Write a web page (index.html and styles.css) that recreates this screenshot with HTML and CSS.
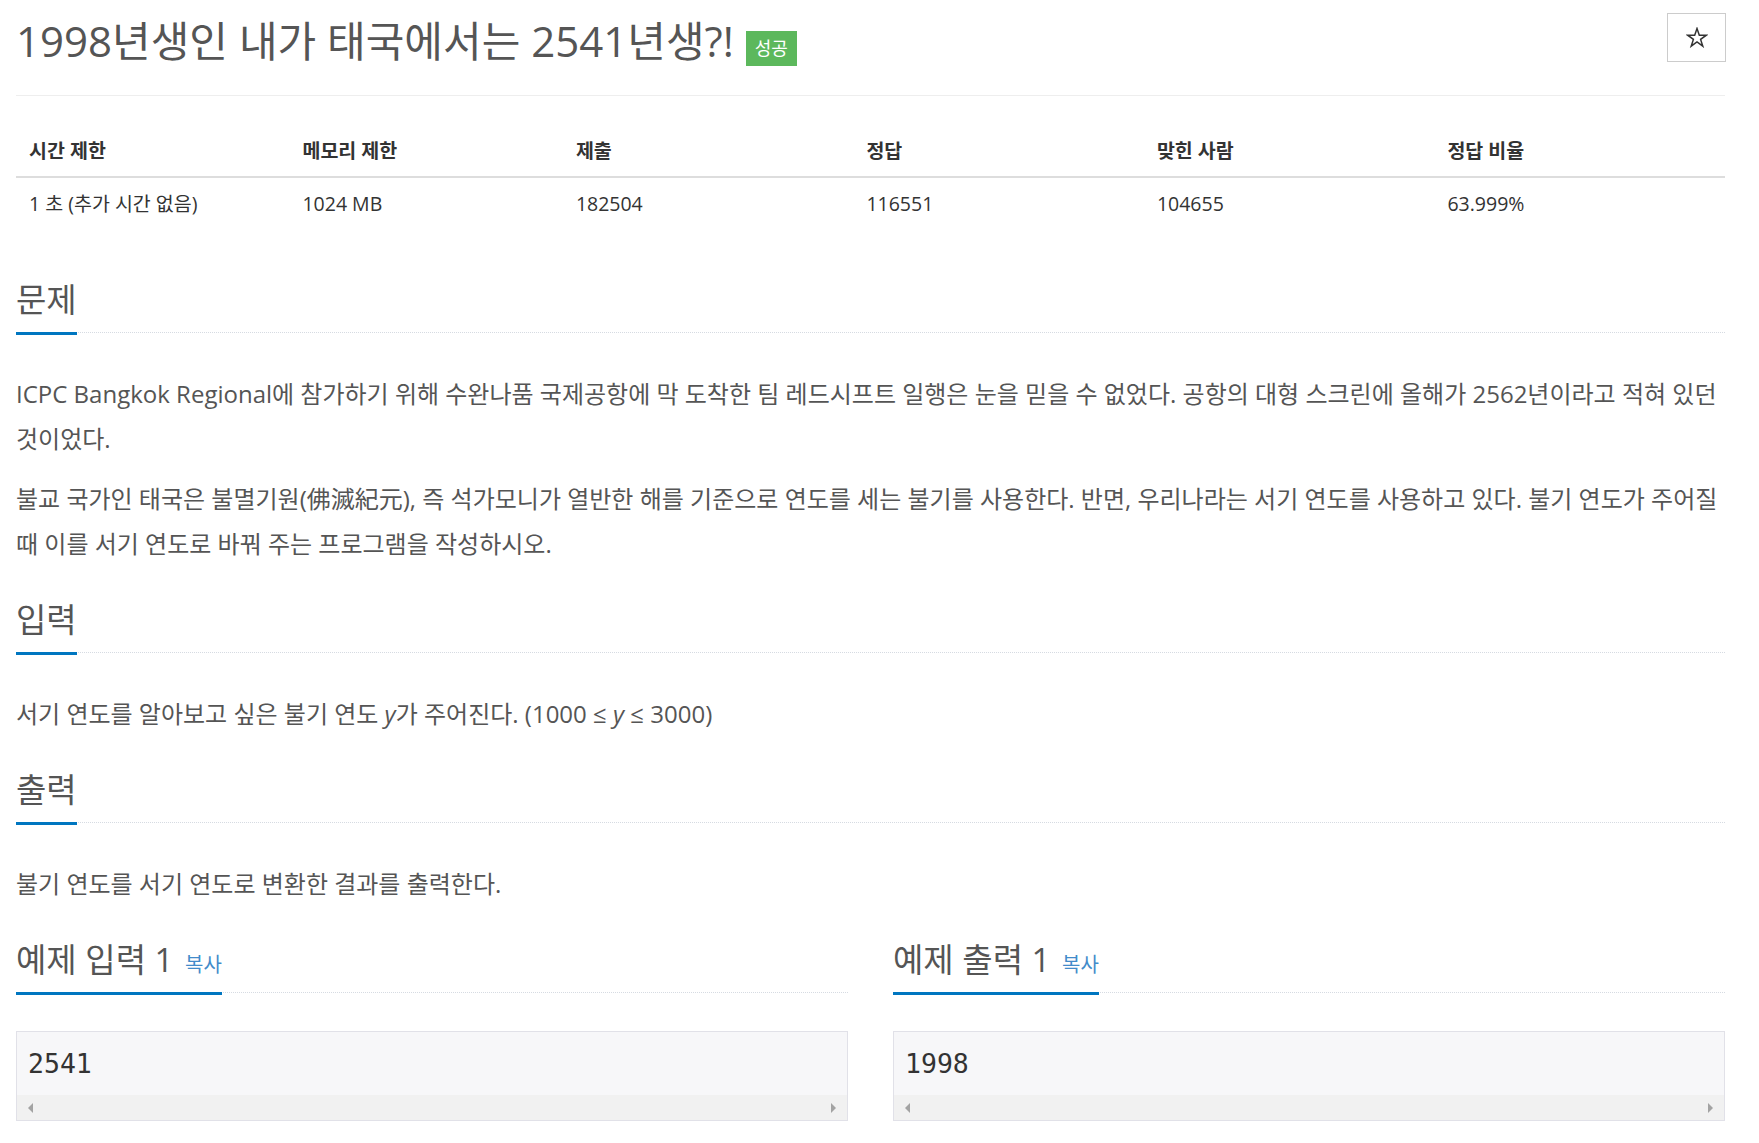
FILE: index.html
```html
<!DOCTYPE html>
<html>
<head>
<meta charset="utf-8">
<meta name="viewport" content="width=device-width, initial-scale=1">
<link rel="stylesheet" href="styles.css">
</head>
<body>

<div class="page">

  <div class="title-row">
    <h1 class="title"><span>1998년생인 내가 태국에서는 2541년생?!</span><span class="badge">성공</span></h1>
    <button class="star" title="즐겨찾기">
      <svg width="22" height="21" viewBox="0 0 22 21"><polygon points="11,1.5 13.3,8.2 20.3,8.2 14.6,12.4 16.8,19.2 11,15 5.2,19.2 7.4,12.4 1.7,8.2 8.7,8.2" fill="none" stroke="#333" stroke-width="1.5" stroke-linejoin="miter"/></svg>
    </button>
  </div>

  <table class="info">
    <thead>
      <tr>
        <th class="w16">시간 제한</th>
        <th class="w16">메모리 제한</th>
        <th class="w17">제출</th>
        <th class="w17">정답</th>
        <th class="w17">맞힌 사람</th>
        <th class="w17">정답 비율</th>
      </tr>
    </thead>
    <tbody>
      <tr>
        <td>1 초 (추가 시간 없음)</td>
        <td>1024 MB</td>
        <td>182504</td>
        <td>116551</td>
        <td>104655</td>
        <td>63.999%</td>
      </tr>
    </tbody>
  </table>

  <section class="section problem">
    <div class="headline"><h2>문제</h2></div>
    <div class="text">
      <p>ICPC Bangkok Regional에 참가하기 위해 수완나품 국제공항에 막 도착한 팀 레드시프트 일행은 눈을 믿을 수 없었다. 공항의 대형 스크린에 올해가 2562년이라고 적혀 있던 것이었다.</p>
      <p>불교 국가인 태국은 불멸기원(佛滅紀元), 즉 석가모니가 열반한 해를 기준으로 연도를 세는 불기를 사용한다. 반면, 우리나라는 서기 연도를 사용하고 있다. 불기 연도가 주어질 때 이를 서기 연도로 바꿔 주는 프로그램을 작성하시오.</p>
    </div>
  </section>

  <section class="section">
    <div class="headline"><h2>입력</h2></div>
    <div class="text">
      <p>서기 연도를 알아보고 싶은 불기 연도 <i>y</i>가 주어진다. (1000 ≤ <i>y</i> ≤ 3000)</p>
    </div>
  </section>

  <section class="section">
    <div class="headline"><h2>출력</h2></div>
    <div class="text">
      <p>불기 연도를 서기 연도로 변환한 결과를 출력한다.</p>
    </div>
  </section>

  <div class="samples">
    <section class="section">
      <div class="headline"><h2>예제 입력 1 <a class="copy">복사</a></h2></div>
      <div class="sample">
        <pre>2541</pre>
        <div class="scrollbar"><span class="arrow-left"></span><span class="arrow-right"></span></div>
      </div>
    </section>
    <section class="section">
      <div class="headline"><h2>예제 출력 1 <a class="copy">복사</a></h2></div>
      <div class="sample">
        <pre>1998</pre>
        <div class="scrollbar"><span class="arrow-left"></span><span class="arrow-right"></span></div>
      </div>
    </section>
  </div>

</div>

</body>
</html>
```

FILE: styles.css
```css
body {
  margin: 0;
  font-family: "Open Sans", "Noto Sans CJK KR", sans-serif;
  color: #555;
  background: #fff;
}

.page {
  margin-left: 16px;
  width: 1709px;
}

/* ******** title ******** */

.title-row {
  display: flex;
  justify-content: space-between;
  align-items: flex-start;
  padding: 13px 0 29px;
  border-bottom: 1px solid #eee;
}

.title {
  display: flex;
  align-items: flex-start;
  margin: 3px 0 0;
  font-size: 42px;
  font-weight: 400;
  line-height: 49px;
  color: #555;
}

.badge {
  margin: 15px 0 0 12px;
  padding: 0 9px;
  height: 35px;
  font-size: 18px;
  line-height: 35px;
  color: #fff;
  background-color: #5cb85c;
}

.star {
  display: flex;
  align-items: center;
  justify-content: center;
  width: 59px;
  height: 49px;
  margin-right: -1px;
  padding: 0;
  border: 1px solid #ccc;
  background: #fff;
  cursor: pointer;
}

/* ******** info table ******** */

.info {
  width: 100%;
  margin-top: 33px;
  border-collapse: collapse;
  font-size: 19.5px;
  color: #333;
}

.info th {
  text-align: left;
  font-weight: 700;
  line-height: 25px;
  padding: 9px 13px 13px;
  border-bottom: 2px solid #ddd;
}

.info td {
  line-height: 25px;
  padding: 13px 13px;
}

.w16 { width: 16%; }
.w17 { width: 17%; }

/* ******** sections ******** */

.section {
  margin-bottom: 37px;
}

.problem {
  margin-top: 54px;
}

.headline {
  display: flex;
  margin-bottom: 38px;
  border-bottom: 1px dotted #d6dbe2;
}

.headline h2 {
  margin: 0 0 -3px;
  padding-bottom: 16px;
  font-size: 33px;
  font-weight: 400;
  line-height: 33px;
  color: #555;
  border-bottom: 3px solid #0076c0;
}

.copy {
  margin-left: 3px;
  font-size: 20px;
  line-height: 20px;
  color: #428bca;
  cursor: pointer;
}

.text p {
  margin: 0 0 15px;
  font-size: 24px;
  line-height: 45px;
  word-break: keep-all;
}

/* ******** samples ******** */

.samples {
  display: grid;
  grid-template-columns: 1fr 1fr;
  gap: 45px;
  margin-top: 9px;
}

.sample {
  border: 1px solid #e1e1e8;
  background-color: #f7f7f9;
}

.sample pre {
  margin: 0;
  padding: 12px 11px;
  font-family: "DejaVu Sans Mono", monospace;
  font-size: 26.5px;
  line-height: 39px;
  color: #333;
}

.scrollbar {
  display: flex;
  justify-content: space-between;
  align-items: center;
  height: 25px;
  padding: 0 11px;
  background-color: #f1f1f1;
}

.arrow-left {
  width: 0;
  height: 0;
  border-top: 5px solid transparent;
  border-bottom: 5px solid transparent;
  border-right: 5px solid #a3a3a3;
}

.arrow-right {
  width: 0;
  height: 0;
  border-top: 5px solid transparent;
  border-bottom: 5px solid transparent;
  border-left: 5px solid #a3a3a3;
}
```
